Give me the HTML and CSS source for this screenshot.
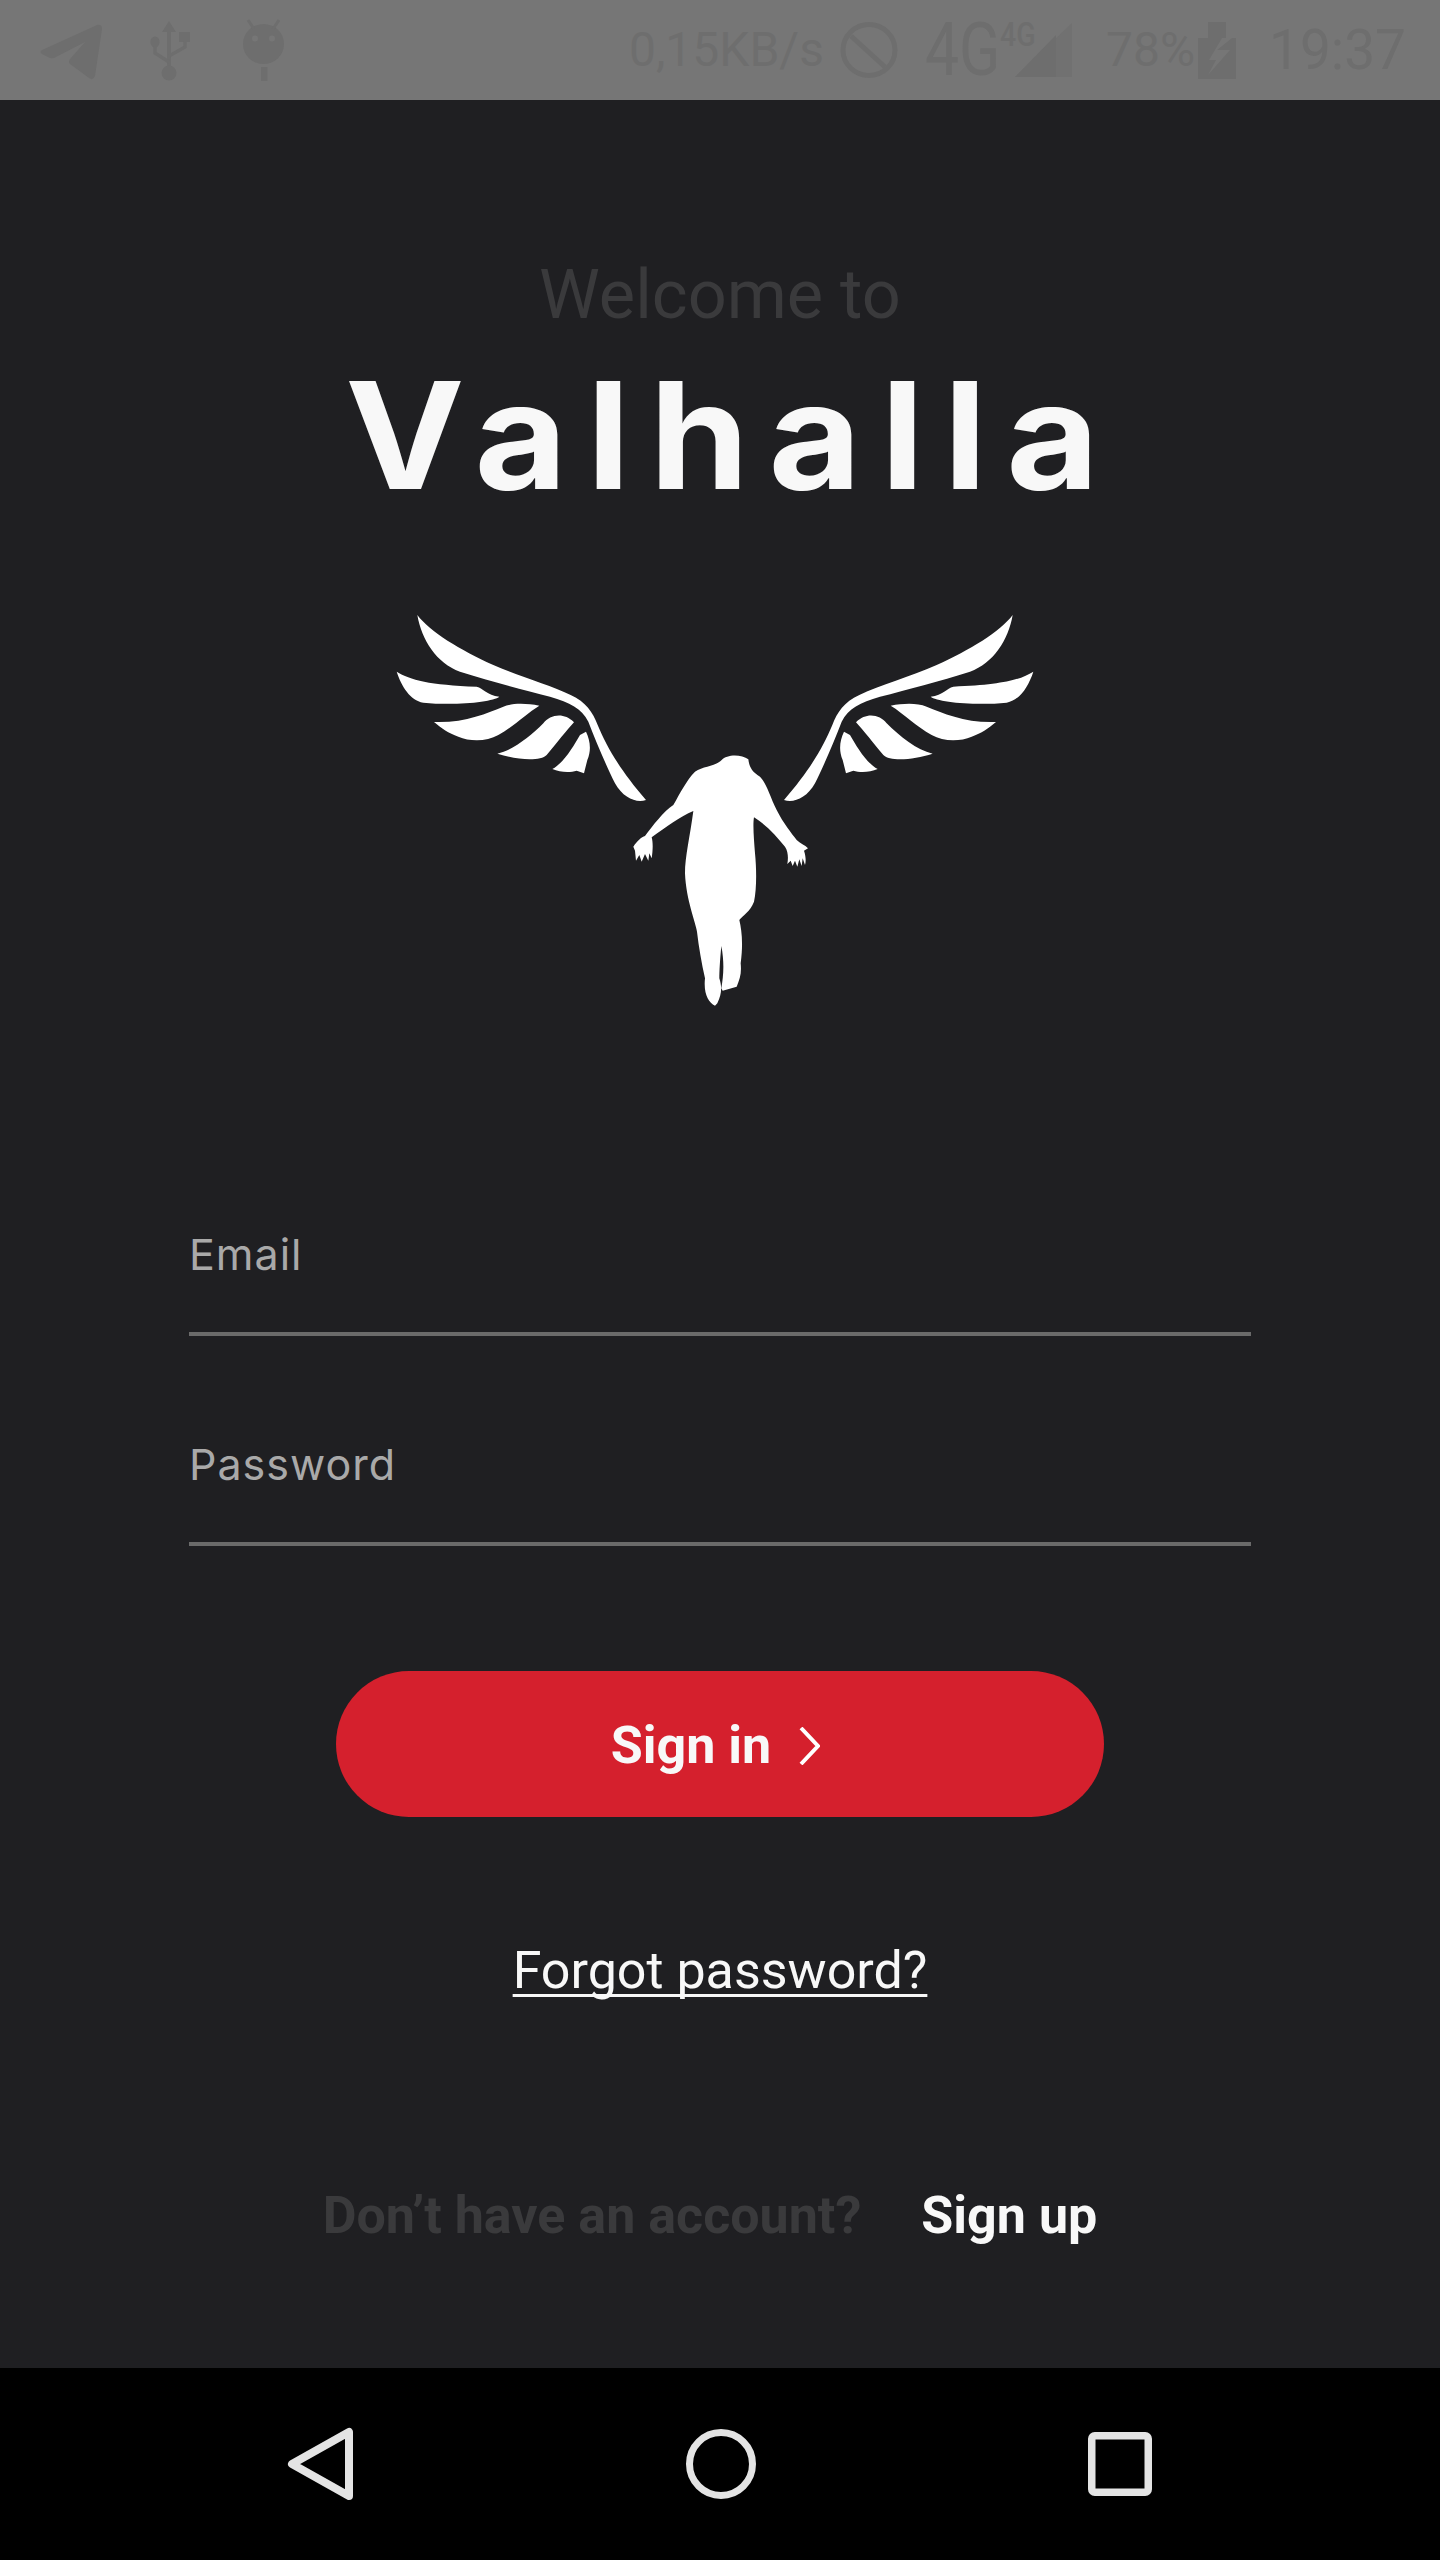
FILE: index.html
```html
<!DOCTYPE html>
<html lang="en">
<head>
    <meta charset="UTF-8">
    <meta name="viewport" content="width=device-width, initial-scale=1.0">
    <title>Valhalla Sign in</title>
    <link rel="stylesheet" href="styles.css">
</head>
<body>
    <div class="status-bar">
        <div class="status-left">
            <svg class="st-telegram" viewBox="40 0 62 100"><path d="M42 50 L97 25 Q102 24 102 29 L95 76 Q93 81 89 78 L70 64 Q68 62 70 59 L85 42 L56 57 Q53 59 50 58 L42 54 Q39 52 42 50Z"/></svg>
            <svg class="st-usb" viewBox="150 0 41 100"><path d="M169 21 L162 32 L167 32 L167 66 L171 66 L171 32 L176 32Z"/><circle cx="169" cy="73" r="7.5"/><ellipse cx="155" cy="42" rx="4.6" ry="5.5"/><rect x="179" y="32" width="11" height="10"/><path d="M155 46 V53 L169 62 M185 41 V47 L169 56" fill="none" stroke="#6e6e6e" stroke-width="3.4"/></svg>
            <svg class="st-droid" viewBox="243 0 42 100"><ellipse cx="263.5" cy="44" rx="20.5" ry="20"/><path d="M248 20 L254 29 M279 20 L273 29" fill="none" stroke="#6e6e6e" stroke-width="3"/><circle cx="255" cy="38.500" r="3" fill="#767676"/><circle cx="272" cy="38.500" r="3" fill="#767676"/><rect x="261" y="67" width="6.500" height="14"/></svg>
        </div>
        <div class="status-right">
            <span class="st-speed">0,15KB/s</span>
            <svg class="st-dnd" viewBox="840 0 58 100"><ellipse cx="869" cy="50" rx="26" ry="25.500" fill="none" stroke="#6e6e6e" stroke-width="5"/><path d="M851 36 L885 67" stroke="#6e6e6e" stroke-width="5"/></svg>
            <div class="st-net">
                <span class="st-4g">4G</span>
                <span class="st-4g-small">4G</span>
                <svg class="st-signal" viewBox="1016 0 57 100"><path d="M1016 77 L1073 23 V77Z" fill="#717171"/><path d="M1016 77 L1057 35 V77Z"/></svg>
            </div>
            <span class="st-battery-text">78%</span>
            <svg class="st-battery" viewBox="1199 0 38 100"><path fill-rule="evenodd" d="M1209 22 H1227 V38 H1237 V79 H1199 V38 H1209Z M1223 38 L1210 60 H1217 L1209 75 L1231 50 H1218 L1233 38Z"/></svg>
            <span class="st-time">19:37</span>
        </div>
    </div>

    <div class="main">
        <div class="welcome">Welcome to</div>
        <h1 class="title">Valhalla</h1>

        <svg class="logo" viewBox="380 600 680 420">
            <defs>
                <g id="wing" transform="translate(380 600) scale(0.33333)">
                    <path d="M112 45 C150 95 240 150 340 195 C420 230 510 255 572 285 C618 306 638 336 653 375 C680 440 720 510 798 600 C770 610 730 595 705 550 C680 500 650 430 625 365 C605 325 570 307 510 290 C430 270 330 243 240 215 C170 190 125 120 112 45Z"/>
                    <path d="M50 215 C90 240 150 255 290 260 C310 265 320 285 358 290 C340 305 230 318 130 308 C90 300 65 260 50 215Z"/>
                    <path d="M162 366 C250 370 320 340 370 320 C400 308 440 310 478 317 C440 340 400 380 355 405 C320 425 270 425 235 410 C205 400 185 385 162 366Z"/>
                    <path d="M352 461 C400 450 450 410 490 370 C510 345 550 335 582 367 C560 390 530 430 500 465 C480 485 410 480 352 461Z"/>
                    <path d="M517 507 C550 490 580 440 600 405 L618 395 C630 420 635 450 622 480 L612 520 L590 512 C570 518 540 517 517 507Z"/>
                </g>
            </defs>
            <use href="#wing"/>
            <use href="#wing" transform="translate(1430 0) scale(-1 1)"/>
            <path transform="translate(600 730) scale(0.33333)" d="M365 90 C380 72 425 72 445 88 C448 110 455 125 480 140 C500 160 510 200 530 240 C550 280 575 310 590 330 C600 340 615 345 624 355 L612 362 C618 380 618 395 615 405 L608 385 L605 408 L598 388 L592 410 L585 392 L578 408 L572 392 L562 402 C565 385 565 365 555 350 C530 320 500 285 462 262 C458 285 462 330 465 370 C470 420 470 480 462 515 C450 545 430 555 418 570 C425 600 430 640 422 700 C425 730 420 745 410 770 L368 782 L364 775 C370 740 374 700 364 648 C360 690 358 725 358 745 C366 770 366 790 352 820 L345 827 C325 818 310 790 315 745 C305 700 296 650 291 605 C288 580 258 510 255 430 C255 380 270 320 280 243 C240 260 200 290 155 322 C160 340 158 365 155 385 L148 370 L145 392 L135 372 L125 395 L118 375 L108 392 L105 362 L100 350 C110 335 125 320 135 318 C160 285 190 245 220 225 C240 190 260 150 285 125 C310 108 345 110 365 90Z"/>
        </svg>

        <div class="form">
            <div class="field">Email</div>
            <div class="field">Password</div>
        </div>

        <button class="signin">
            <span>Sign in</span>
            <svg class="chevron" viewBox="0 0 21 38"><path d="M2 1 L19 19 L2 37" fill="none" stroke="#fff" stroke-width="4"/></svg>
        </button>

        <a class="forgot" href="#">Forgot password?</a>

        <div class="signup-row">
            <span class="no-account">Don’t have an account?</span>
            <a class="signup" href="#">Sign up</a>
        </div>
    </div>

    <div class="nav-bar">
        <svg viewBox="0 0 80 80"><path d="M12 40 L69 8 V72Z" fill="none" stroke="#e4e4e4" stroke-width="8" stroke-linejoin="round"/></svg>
        <svg viewBox="0 0 80 80"><circle cx="41" cy="40" r="31.500" fill="none" stroke="#e4e4e4" stroke-width="7"/></svg>
        <svg viewBox="0 0 80 80"><rect x="11.750" y="11.750" width="56.500" height="56.500" rx="3" fill="none" stroke="#e4e4e4" stroke-width="7.500"/></svg>
    </div>
</body>
</html>
```

FILE: styles.css
```css
body {
    margin: 0;
    padding: 0;
    width: 1440px;
    height: 2560px;
    display: flex;
    flex-direction: column;
    background-color: #1f1f22;
    font-family: 'Roboto', sans-serif;
    overflow: hidden;
}

/* status bar, everything is dimmed behind an overlay */
.status-bar {
    height: 100px;
    flex-shrink: 0;
    display: flex;
    justify-content: space-between;
    background-color: #767676;
    color: #6e6e6e;
    padding: 0 34px 0 40px;
}

.status-bar svg {
    height: 100px;
    fill: #6e6e6e;
    flex-shrink: 0;
}

.status-left,
.status-right {
    display: flex;
    align-items: stretch;
}

.status-right {
    align-items: center;
}

.st-telegram { width: 62px; }
.st-usb { width: 41px; margin-left: 48px; }
.st-droid { width: 42px; margin-left: 52px; }

.st-speed {
    font-size: 48px;
    line-height: 100px;
}

.st-dnd {
    width: 58px;
    margin-left: 16px;
}

.st-net {
    position: relative;
    display: flex;
    width: 147px;
    height: 100px;
    margin-left: 27px;
}

.st-4g {
    font-size: 74px;
    line-height: 100px;
    font-weight: 400;
    transform: scaleX(0.82);
    transform-origin: left center;
}

.st-4g-small {
    position: absolute;
    left: 75px;
    top: 14px;
    font-size: 34px;
    line-height: 40px;
    font-weight: 500;
    transform: scaleX(0.84);
    transform-origin: left center;
}

.status-bar .st-signal {
    position: absolute;
    left: 90px;
    top: 0;
    width: 57px;
}

.st-battery-text {
    font-size: 48px;
    line-height: 100px;
    margin-left: 34px;
}

.st-battery {
    width: 38px;
    margin-left: 3px;
}

.st-time {
    font-size: 55px;
    line-height: 100px;
    margin-left: 33px;
}

/* main */
.main {
    flex: 1;
    display: flex;
    flex-direction: column;
    align-items: center;
}

.welcome {
    margin-top: 155px;
    font-size: 68.5px;
    line-height: 80px;
    font-weight: 400;
    color: #3a3a3c;
}

.title {
    margin: 27px 0 0;
    padding-left: 21px;
    font-family: 'Inter', sans-serif;
    font-size: 148px;
    line-height: 148px;
    font-weight: 700;
    letter-spacing: 18px;
    color: #f8f8f8;
    transform: scaleX(1.08);
}

.logo {
    width: 680px;
    height: 420px;
    margin-top: 90px;
    fill: #fff;
}

.form {
    width: 1062px;
    margin-top: 204px;
    display: flex;
    flex-direction: column;
    gap: 98px;
}

.field {
    height: 108px;
    border-bottom: 4px solid #6a6a6a;
    font-family: 'Inter', sans-serif;
    font-size: 43px;
    letter-spacing: 1px;
    line-height: 60px;
    color: #a9a9a9;
}

.signin {
    width: 768px;
    height: 146px;
    margin-top: 125px;
    border: none;
    border-radius: 73px;
    background-color: #d5202d;
    color: #f8f8f8;
    font-family: 'Roboto', sans-serif;
    font-size: 52px;
    font-weight: 700;
    line-height: 60px;
    display: flex;
    align-items: center;
    justify-content: center;
    gap: 28px;
    padding: 4px 9px 0 0;
}

.chevron {
    width: 21px;
    height: 38px;
}

.forgot {
    margin-top: 124px;
    font-size: 52px;
    line-height: 60px;
    color: #f8f8f8;
    text-decoration: underline;
    text-decoration-thickness: 3px;
    text-decoration-skip-ink: none;
    text-underline-offset: 6px;
}

.signup-row {
    margin-top: 185px;
    padding-right: 20px;
    display: flex;
    gap: 60px;
    font-size: 52px;
    line-height: 60px;
    font-weight: 700;
}

.no-account {
    color: #3a3a3c;
}

.signup {
    color: #f8f8f8;
    text-decoration: none;
}

/* android nav */
.nav-bar {
    height: 192px;
    flex-shrink: 0;
    background-color: #000;
    display: flex;
    align-items: center;
    justify-content: center;
    gap: 320px;
}

.nav-bar svg {
    width: 80px;
    height: 80px;
}
```
